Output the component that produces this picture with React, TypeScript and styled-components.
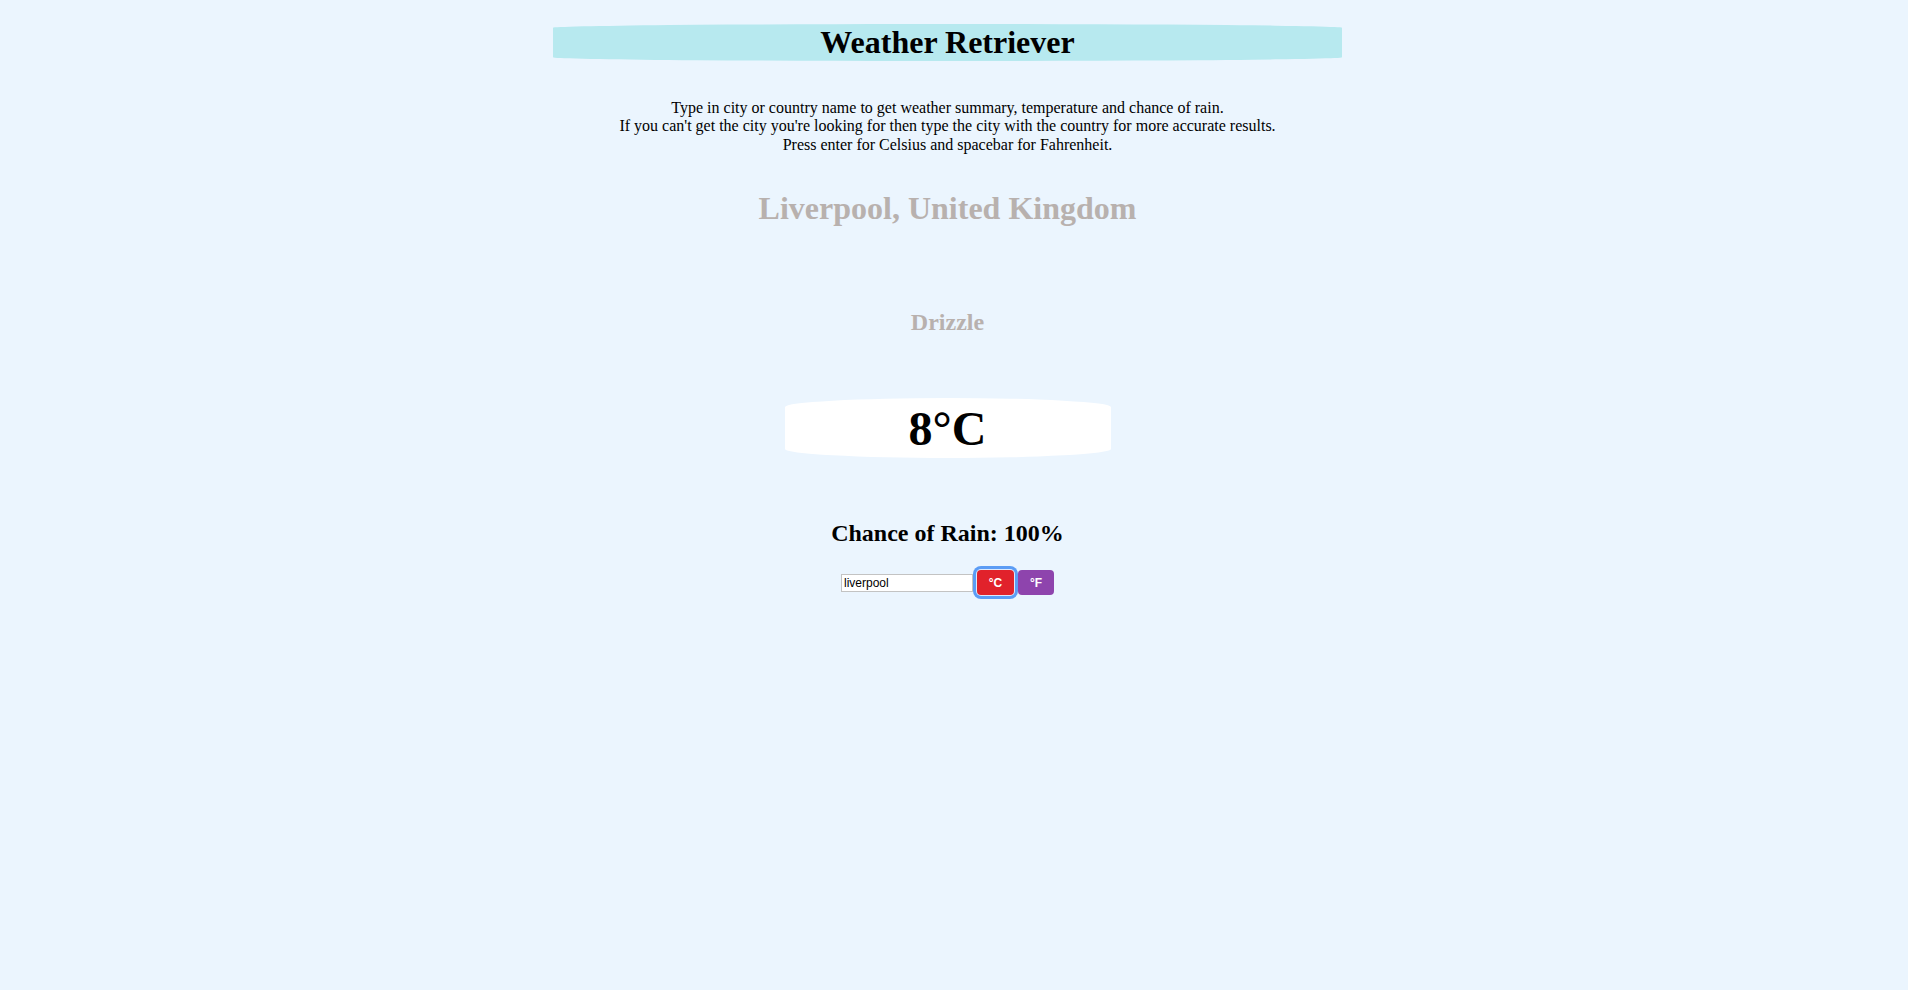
import React, { useState } from "react";
import styled, { createGlobalStyle } from "styled-components";

const GlobalStyle = createGlobalStyle`
  html, body {
    margin: 0;
    padding: 0;
    background: #ebf5fe;
  }
`;

const Page = styled.div`
  min-height: 990px;
  box-sizing: border-box;
  padding: 24px 13px 0 0;
  background: #ebf5fe;
  font-family: "Liberation Serif", "Times New Roman", serif;
  color: #000;
  text-align: center;
  display: flex;
  flex-direction: column;
  align-items: center;
`;

const TitleBar = styled.h1`
  width: 789px;
  height: 37px;
  margin: 0;
  line-height: 37px;
  font-size: 32px;
  font-weight: bold;
  background: #b7e9ef;
  border-radius: 50% / 10%;
`;

const Intro = styled.p`
  margin: 38px 0 0;
  font-size: 16px;
  line-height: 18.4px;
`;

const Location = styled.h1`
  margin: 36px 0 0;
  font-size: 32px;
  line-height: 37px;
  font-weight: bold;
  color: #b8b1ae;
`;

const Summary = styled.h2`
  margin: 81px 0 0;
  font-size: 24px;
  line-height: 28px;
  font-weight: bold;
  color: #b8b1ae;
`;

const TempBox = styled.div`
  margin-top: 62px;
  width: 326px;
  height: 60px;
  background: #ffffff;
  border-radius: 50% / 15%;
  display: flex;
  align-items: center;
  justify-content: center;
  font-size: 48px;
  font-weight: bold;
  line-height: 55px;
`;

const Rain = styled.h2`
  margin: 61px 0 0;
  font-size: 24px;
  line-height: 28px;
  font-weight: bold;
`;

const Controls = styled.div`
  margin-top: 23px;
  display: flex;
  align-items: center;
  gap: 4px;
`;

const CityInput = styled.input`
  box-sizing: border-box;
  width: 132px;
  height: 18px;
  margin: 0;
  padding: 0 2px;
  border: 1px solid #c3c3c3;
  background: #fff;
  font-family: "Liberation Sans", Arial, sans-serif;
  font-size: 12px;
  color: #000;
  outline: none;
`;

const UnitButton = styled.button<{ $bg: string; $focused?: boolean }>`
  box-sizing: border-box;
  width: ${(p) => (p.$focused ? "37px" : "36px")};
  height: 25px;
  padding: 0;
  border: none;
  border-radius: 4px;
  background: ${(p) => p.$bg};
  color: #fff;
  font-family: "Liberation Sans", Arial, sans-serif;
  font-size: 12px;
  font-weight: bold;
  cursor: pointer;
  box-shadow: ${(p) =>
    p.$focused ? "0 0 0 1px #dce9fc, 0 0 0 4px #5b9cf5" : "none"};
  outline: none;
`;

export default function App() {
  const [city, setCity] = useState("liverpool");
  return (
    <>
      <GlobalStyle />
      <Page>
        <TitleBar>Weather Retriever</TitleBar>
        <Intro>
          Type in city or country name to get weather summary, temperature and chance of rain.
          <br />
          If you can't get the city you're looking for then type the city with the country for more accurate results.
          <br />
          Press enter for Celsius and spacebar for Fahrenheit.
        </Intro>
        <Location>Liverpool, United Kingdom</Location>
        <Summary>Drizzle</Summary>
        <TempBox>8°C</TempBox>
        <Rain>Chance of Rain: 100%</Rain>
        <Controls>
          <CityInput value={city} onChange={(e) => setCity(e.target.value)} />
          <UnitButton $bg="#e1222b" $focused>
            °C
          </UnitButton>
          <UnitButton $bg="#8e44ad">°F</UnitButton>
        </Controls>
      </Page>
    </>
  );
}
